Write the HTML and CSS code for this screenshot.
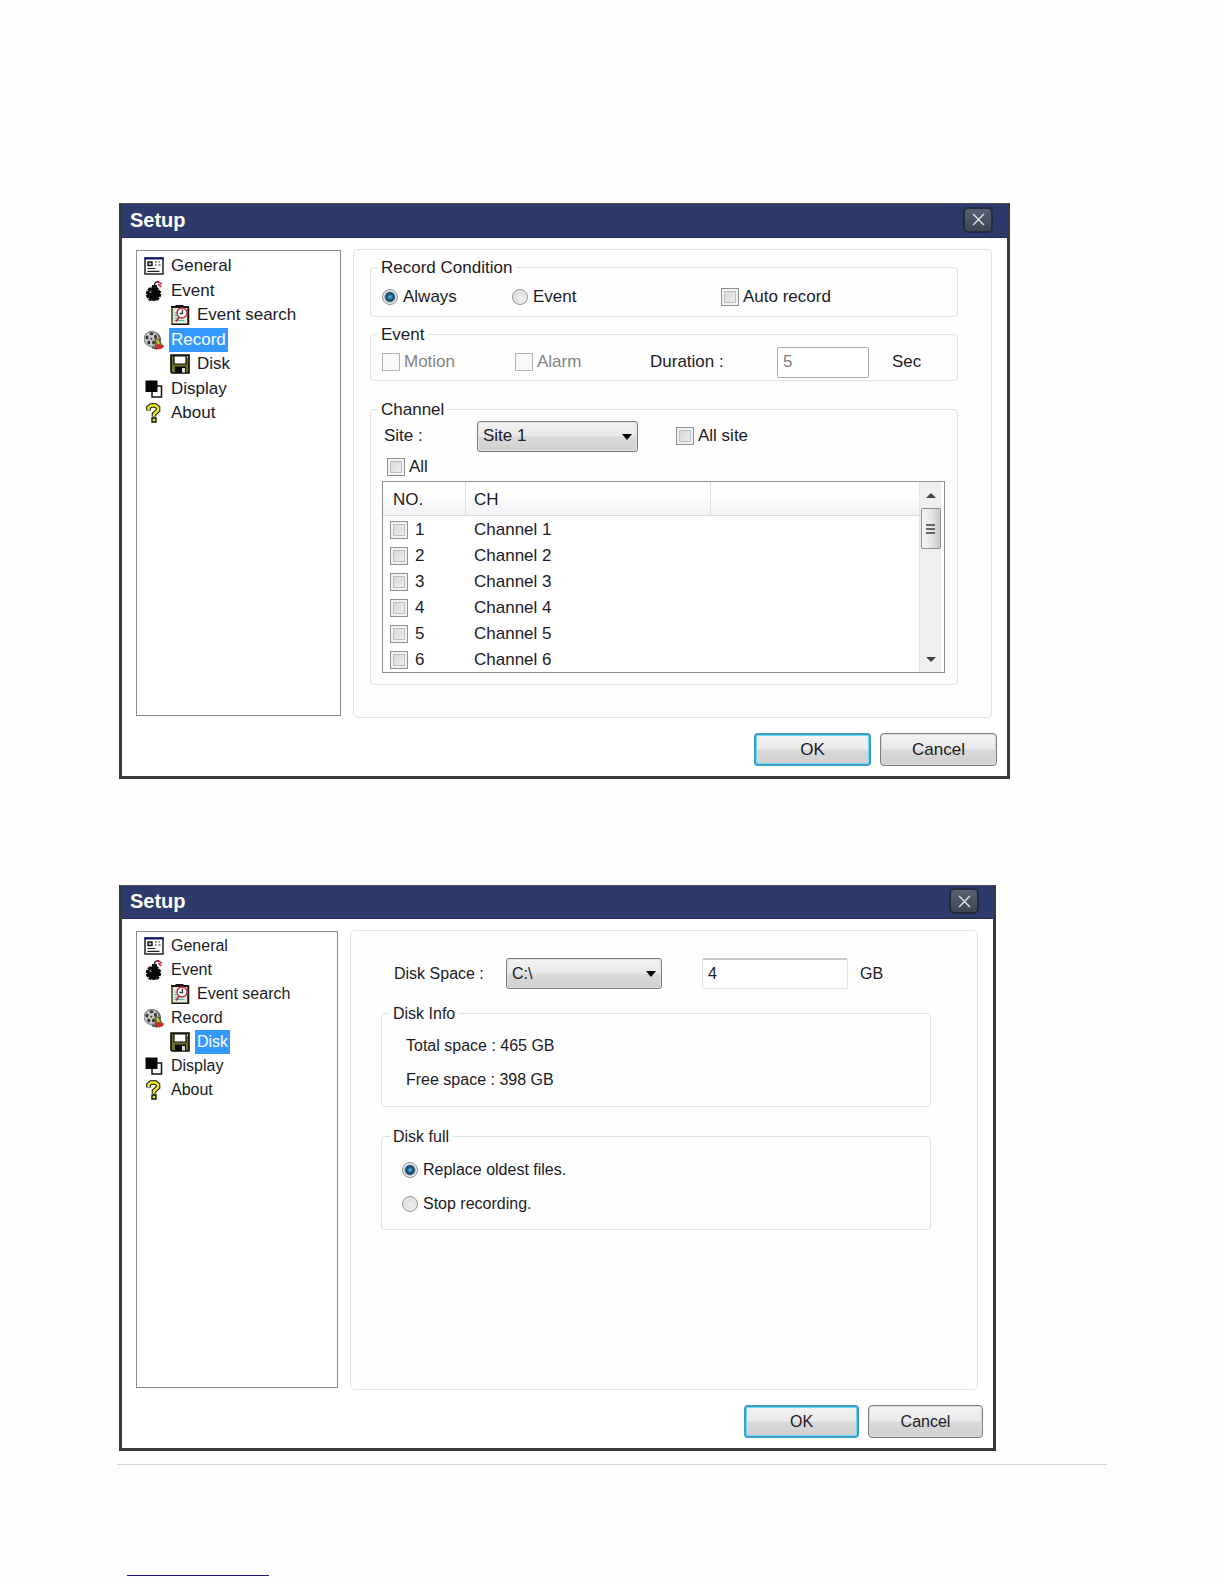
FILE: index.html
```
<!DOCTYPE html>
<html lang="en">
<head>
    <meta charset="UTF-8">
    <meta name="viewport" content="width=device-width, initial-scale=1.0">
    <title>Setup</title>
    <link rel="stylesheet" href="styles.css">
</head>
<body>
    <!-- Icons shared by both dialogs -->
    <svg class="icon-sprite" aria-hidden="true">
        <symbol id="icon-general" viewBox="0 0 20 20">
            <rect x="1" y="2" width="18" height="16" fill="#fff" stroke="#111" stroke-width="1.4"/>
            <path d="M0.5 2.5h19" stroke="#15157a" stroke-width="2"/>
            <rect x="4" y="6" width="4" height="3.5" fill="#ccc" stroke="#111" stroke-width="1.4"/>
            <path d="M11 6h2M14.5 6h1.500M11 9h1.500M14.5 9h2M3.5 12.5h8M3.5 15.3h12" stroke="#222" stroke-width="1.2"/>
        </symbol>
        <symbol id="icon-bomb" viewBox="0 0 20 20">
            <circle cx="9.500" cy="13" r="6.500" fill="#080808" stroke="#080808" stroke-width="2.400" stroke-dasharray="3 1"/>
            <path d="M8 7V4h5v3z" fill="#111"/>
            <path d="M10.500 4c0-3 3-4 4.500-2.500" fill="none" stroke="#222" stroke-width="1.300"/>
            <path d="M14 0l1.500 2M14.500 3l2.500 3M17 1.500v2" stroke="#c41e32" stroke-width="1.700"/>
            <path d="M5 11h3M6.500 9.500v3" stroke="#666" stroke-width="1.200"/>
        </symbol>
        <symbol id="icon-search" viewBox="0 0 20 20">
            <rect x="2" y="2" width="16" height="17.500" fill="#e5e6c4" stroke="#5f6228" stroke-width="1.800"/>
            <path d="M18.500 2v17.500H2" fill="none" stroke="#111" stroke-width="1.500"/>
            <path d="M1 3V1h4l1-1h7l1 1h5v2z" fill="#171717"/>
            <rect x="4" y="4.500" width="12" height="13" fill="#d7f0ea"/>
            <path d="M4.500 8h3M4.500 10.500h3M4.500 13h5M4.500 15.500h10" stroke="#5fb5ae" stroke-width="1.200"/>
            <circle cx="12" cy="8" r="5" fill="#fff" stroke="#c32a3d" stroke-width="1.400"/>
            <path d="M12.500 4.500V8.500H9.500" fill="none" stroke="#334" stroke-width="1.300"/>
            <path d="M9 12.500l-3 4" stroke="#c8202c" stroke-width="1.500"/>
        </symbol>
        <symbol id="icon-record" viewBox="0 0 20 20">
            <ellipse cx="9" cy="9" rx="8.500" ry="7.500" fill="#666" transform="rotate(35 9 9)"/>
            <ellipse cx="7.500" cy="9" rx="7.500" ry="7.500" fill="#c9c9c9" stroke="#777"/>
            <g fill="#383838">
                <ellipse cx="7.500" cy="3.800" rx="2" ry="1.500"/>
                <ellipse cx="3" cy="7.500" rx="1.500" ry="2"/>
                <ellipse cx="11.500" cy="6.800" rx="1.500" ry="2"/>
                <ellipse cx="4.800" cy="12.500" rx="1.500" ry="2"/>
                <ellipse cx="9.500" cy="12.500" rx="1.500" ry="2"/>
                <circle cx="7.300" cy="8.700" r="1"/>
            </g>
            <path d="M11 8l4 2 4 6.500-7 3z" fill="#77782b" stroke="#44451c" stroke-width=".7"/>
            <path d="M13 10l2 4" stroke="#d3ca4b" stroke-width="2"/>
            <path d="M11 16l4-2 1.500 1.500 3.500-.5-1 3-4 1.500z" fill="#d42820"/>
            <path d="M7 17h5l2 2H9z" fill="#555"/>
        </symbol>
        <symbol id="icon-disk" viewBox="0 0 20 20">
            <path d="M1 1h18v18H2l-1-1z" fill="#707127" stroke="#0a0a0a" stroke-width="1.600"/>
            <path d="M4 2h12v8H4z" fill="#fff" stroke="#111" stroke-width="1.200"/>
            <path d="M5 12.500h11V19H5z" fill="#0a0a0a"/>
            <path d="M12 14h3v4.500h-3z" fill="#ddd"/>
            <path d="M17 3h1" stroke="#e5e5c5" stroke-width="1.500"/>
        </symbol>
        <symbol id="icon-display" viewBox="0 0 20 20">
            <rect x="8" y="7" width="9.500" height="11" fill="#fff" stroke="#111" stroke-width="1.500"/>
            <rect x="1.500" y="1.500" width="12" height="11.500" fill="#050505"/>
        </symbol>
        <symbol id="icon-about" viewBox="0 0 20 20">
            <path d="M4.500 7.500V4.500L7 2.500h4.500L14 4.500v3L10 11v2.500" fill="none" stroke="#101005" stroke-width="4.600"/>
            <path d="M8 15h4v4H8z" fill="#eaea28" stroke="#101005" stroke-width="1.400"/>
            <path d="M4.500 7V4.500L7 2.500h4.500L14 4.500v3L10 11v2" fill="none" stroke="#eaea28" stroke-width="2.600"/>
        </symbol>
    </svg>

    <main class="page">
        <section class="dialog dialog-record">
            <header class="title-bar">
                <h2>Setup</h2>
                <button class="close-button" type="button" aria-label="Close">
                    <svg viewBox="0 0 12 12"><path d="M1 1l10 10M11 1L1 11"/></svg>
                </button>
            </header>
            <div class="dialog-body">
                <ul class="tree">
                    <li><svg class="icon"><use href="#icon-general"/></svg><span>General</span></li>
                    <li><svg class="icon"><use href="#icon-bomb"/></svg><span>Event</span></li>
                    <li class="child"><svg class="icon"><use href="#icon-search"/></svg><span>Event search</span></li>
                    <li><svg class="icon"><use href="#icon-record"/></svg><span class="selected">Record</span></li>
                    <li class="child"><svg class="icon"><use href="#icon-disk"/></svg><span>Disk</span></li>
                    <li><svg class="icon"><use href="#icon-display"/></svg><span>Display</span></li>
                    <li><svg class="icon"><use href="#icon-about"/></svg><span>About</span></li>
                </ul>

                <form class="panel">
                    <fieldset>
                        <legend>Record Condition</legend>
                        <div class="row condition-row">
                            <label><input type="radio" name="condition" checked>Always</label>
                            <label><input type="radio" name="condition">Event</label>
                            <label><input type="checkbox">Auto record</label>
                        </div>
                    </fieldset>

                    <fieldset class="event-group">
                        <legend>Event</legend>
                        <div class="row event-row">
                            <label class="disabled"><input type="checkbox" disabled>Motion</label>
                            <label class="disabled"><input type="checkbox" disabled>Alarm</label>
                            <label for="duration">Duration :</label>
                            <input class="text-box duration" type="text" id="duration" value="5" disabled>
                            <span>Sec</span>
                        </div>
                    </fieldset>

                    <fieldset class="channel-group">
                        <legend>Channel</legend>
                        <div class="row site-row">
                            <label for="site">Site :</label>
                            <div class="select-box site-select">
                                <select id="site"><option>Site 1</option></select>
                            </div>
                            <label><input type="checkbox">All site</label>
                        </div>
                        <div class="row all-row">
                            <label><input type="checkbox">All</label>
                        </div>
                        <div class="channel-list">
                            <table>
                                <colgroup>
                                    <col class="col-no">
                                    <col class="col-ch">
                                    <col>
                                </colgroup>
                                <thead>
                                    <tr><th>NO.</th><th>CH</th><th></th></tr>
                                </thead>
                                <tbody>
                                    <tr><td><label><input type="checkbox">1</label></td><td>Channel 1</td><td></td></tr>
                                    <tr><td><label><input type="checkbox">2</label></td><td>Channel 2</td><td></td></tr>
                                    <tr><td><label><input type="checkbox">3</label></td><td>Channel 3</td><td></td></tr>
                                    <tr><td><label><input type="checkbox">4</label></td><td>Channel 4</td><td></td></tr>
                                    <tr><td><label><input type="checkbox">5</label></td><td>Channel 5</td><td></td></tr>
                                    <tr><td><label><input type="checkbox">6</label></td><td>Channel 6</td><td></td></tr>
                                </tbody>
                            </table>
                            <div class="scrollbar">
                                <div class="arrow arrow-up"></div>
                                <div class="thumb"><i></i><i></i><i></i></div>
                                <div class="arrow arrow-down"></div>
                            </div>
                        </div>
                    </fieldset>
                </form>
            </div>
            <footer class="dialog-buttons">
                <button class="button default" type="button">OK</button>
                <button class="button" type="button">Cancel</button>
            </footer>
        </section>

        <section class="dialog dialog-disk">
            <header class="title-bar">
                <h2>Setup</h2>
                <button class="close-button" type="button" aria-label="Close">
                    <svg viewBox="0 0 12 12"><path d="M1 1l10 10M11 1L1 11"/></svg>
                </button>
            </header>
            <div class="dialog-body">
                <ul class="tree">
                    <li><svg class="icon"><use href="#icon-general"/></svg><span>General</span></li>
                    <li><svg class="icon"><use href="#icon-bomb"/></svg><span>Event</span></li>
                    <li class="child"><svg class="icon"><use href="#icon-search"/></svg><span>Event search</span></li>
                    <li><svg class="icon"><use href="#icon-record"/></svg><span>Record</span></li>
                    <li class="child"><svg class="icon"><use href="#icon-disk"/></svg><span class="selected">Disk</span></li>
                    <li><svg class="icon"><use href="#icon-display"/></svg><span>Display</span></li>
                    <li><svg class="icon"><use href="#icon-about"/></svg><span>About</span></li>
                </ul>

                <form class="panel">
                    <div class="row space-row">
                        <label for="drive">Disk Space :</label>
                        <div class="select-box drive-select">
                            <select id="drive"><option>C:\</option></select>
                        </div>
                        <input class="text-box space" type="text" value="4" aria-label="Disk space in GB">
                        <span>GB</span>
                    </div>

                    <fieldset class="info-group">
                        <legend>Disk Info</legend>
                        <div class="lines">
                            <p>Total space : 465 GB</p>
                            <p>Free space : 398 GB</p>
                        </div>
                    </fieldset>

                    <fieldset class="full-group">
                        <legend>Disk full</legend>
                        <div class="lines choices">
                            <label><input type="radio" name="full" checked>Replace oldest files.</label>
                            <label><input type="radio" name="full">Stop recording.</label>
                        </div>
                    </fieldset>
                </form>
            </div>
            <footer class="dialog-buttons">
                <button class="button default" type="button">OK</button>
                <button class="button" type="button">Cancel</button>
            </footer>
        </section>

        <hr class="page-rule">
        <a class="page-link" href="#" aria-label="Page link"></a>
    </main>
</body>
</html>
```
FILE: styles.css
```
* {
    margin: 0;
    padding: 0;
    box-sizing: border-box;
}

body {
    background-color: #fefefe;
    color: #1c1a26;
    font-family: "Liberation Sans", Arial, sans-serif;
    font-size: 17px;
    line-height: 20px;
}

input, select, button {
    font: inherit;
    color: inherit;
}

.icon-sprite {
    display: none;
}

.page {
    padding: 203px 117px 8px;
}

/* Dialog frame */
.dialog {
    width: 100%;
    margin-left: 2px;
    border: 3px solid #38383a;
    border-top: 1px solid #4a4f5c;
    background-color: #fff;
}

.dialog-record {
    max-width: 891px;
}

.dialog-disk {
    max-width: 877px;
    margin-top: 106px;
    font-size: 16px;
}

.title-bar {
    display: flex;
    justify-content: space-between;
    align-items: center;
    height: 34px;
    padding: 0 14px 2px 8px;
    background-color: #2c3b6b;
    border-bottom: 1px solid #232b52;
    color: #fff;
}

.dialog-disk .title-bar {
    height: 33px;
}

.title-bar h2 {
    font-size: 20px;
    font-weight: bold;
}

.close-button {
    display: flex;
    justify-content: center;
    align-items: center;
    width: 30px;
    height: 26px;
    border: 2px solid #232b42;
    border-radius: 5px;
    background: linear-gradient(#596170, #3c4551);
}

.close-button svg {
    width: 13px;
    height: 13px;
    fill: none;
    stroke: #e2e4e8;
    stroke-width: 1.3;
}

.dialog-body {
    display: flex;
    gap: 12px;
    padding: 11px 15px 15px 14px;
}

.dialog-buttons {
    display: flex;
    justify-content: flex-end;
    gap: 9px;
    padding: 0 10px 10px;
}

.button {
    width: 117px;
    height: 33px;
    border: 1px solid #7c7c7c;
    border-radius: 4px;
    background: linear-gradient(#f3f3f3, #e9e9e9 48%, #d9d9d9 52%, #cfcfcf);
    box-shadow: inset 0 0 0 1px #d8d8d8;
}

.button.default {
    border: 2px solid #3f9cc6;
    box-shadow: inset 0 0 0 1px #6cd9f5;
}

.dialog-disk .button {
    width: 115px;
}

/* Navigation tree */
.tree {
    flex: 0 0 205px;
    margin: 1px 0 2px;
    padding: 3px 7px;
    border: 1px solid #8b8b8b;
    background-color: #fff;
    list-style: none;
}

.dialog-disk .tree {
    flex-basis: 202px;
    padding-top: 2px;
}

.tree li {
    display: flex;
    align-items: center;
    gap: 5px;
    height: 24px;
}

.dialog-record .tree li:nth-child(even) {
    height: 25px;
}

.tree .child {
    padding-left: 26px;
}

.tree .icon {
    width: 20px;
    height: 20px;
}

.tree span {
    padding: 0 2px;
    line-height: 24px;
}

.tree .selected {
    background-color: #3399ff;
    color: #fff;
}

/* Settings panel */
.panel {
    flex: 1;
    min-width: 0;
    border: 1px solid #dfe3e3;
    border-radius: 5px;
    background-color: #fefefe;
}

.dialog-record .panel {
    padding: 7px 33px 32px 16px;
}

.dialog-disk .panel {
    min-height: 460px;
    padding: 27px 46px 0 30px;
}

fieldset {
    min-width: 0;
    border: 1px solid #dce2e2;
    border-radius: 4px;
}

legend {
    margin-left: 7px;
    padding: 1px 4px 0 3px;
    line-height: 19px;
}

.event-group {
    margin-top: 7px;
}

.channel-group {
    margin-top: 18px;
    padding-bottom: 11px;
}

.info-group {
    margin-top: 14px;
}

.full-group {
    margin-top: 19px;
}

.dialog-disk legend {
    margin-left: 8px;
}

.row {
    display: grid;
    align-items: center;
    padding-left: 11px;
}

.condition-row {
    grid-template-columns: 130px 209px 1fr;
    height: 39px;
}

.event-row {
    grid-template-columns: 133px 135px 127px 115px 1fr;
    height: 36px;
}

.site-row {
    grid-template-columns: 93px 199px 1fr;
    height: 34px;
    padding-left: 13px;
}

.all-row {
    height: 28px;
    padding-left: 16px;
}

.space-row {
    grid-template-columns: 112px 196px 158px 1fr;
    height: 31px;
    padding-left: 13px;
}

label {
    display: flex;
    align-items: center;
    gap: 4px;
}

.disabled {
    color: #838383;
}

.lines {
    padding: 6px 24px 9px;
    line-height: 34px;
}

.choices {
    padding: 7px 20px 8px;
}

/* Form controls */
input[type="checkbox"] {
    appearance: none;
    width: 18px;
    height: 18px;
    border: 1px solid #8e8f8f;
    background: linear-gradient(135deg, #cfd1d3, #f5f5f5);
    box-shadow: inset 0 0 0 2px #f2f2f2, inset 0 0 0 3px #bcbfc2;
}

input[type="checkbox"]:disabled {
    border-color: #b3b3b3;
    background: #fafafa;
    box-shadow: none;
}

input[type="radio"] {
    appearance: none;
    width: 16px;
    height: 16px;
    margin-right: 1px;
    border: 1px solid #8e8f8f;
    border-radius: 50%;
    background: radial-gradient(circle at 60% 60%, #f2f2f2, #cfcfcf);
    box-shadow: inset 0 0 0 1px #f0f0f0;
}

input[type="radio"]:checked {
    background: radial-gradient(circle, #6fc0e4 0, #2779a8 2px, #123c5c 4px, #d5dee4 6px);
}

.text-box {
    height: 31px;
    padding: 0 5px;
    border: 1px solid #aaa;
    border-radius: 2px;
    background-color: #fff;
}

.duration {
    width: 92px;
    color: #838383;
}

.space {
    width: 146px;
    border: 1px solid #e0e2e2;
    border-top: 2px solid #c8c8c8;
}

.select-box {
    position: relative;
    height: 31px;
}

.site-select {
    width: 161px;
}

.drive-select {
    width: 156px;
}

.select-box select {
    appearance: none;
    width: 100%;
    height: 100%;
    padding: 0 24px 0 5px;
    border: 1px solid #7c7c7c;
    border-radius: 3px;
    background: linear-gradient(#f2f2f2, #e8e8e8 48%, #dadada 52%, #cfcfcf);
    box-shadow: inset 0 0 0 1px #e4e4e4;
}

.select-box::after {
    content: "";
    position: absolute;
    top: 13px;
    right: 6px;
    border: 5px solid transparent;
    border-top: 6px solid #000;
    border-bottom: 0;
    pointer-events: none;
}

/* Channel list */
.channel-list {
    display: flex;
    margin: 0 12px 0 11px;
    border: 1px solid #8d8f92;
    background-color: #fff;
}

.channel-list table {
    flex: 1;
    table-layout: fixed;
    border-collapse: separate;
    border-spacing: 0;
}

.col-no {
    width: 83px;
}

.col-ch {
    width: 245px;
}

.channel-list th {
    height: 34px;
    padding: 2px 0 0 8px;
    border-right: 1px solid #dfe2e5;
    border-bottom: 1px solid #d5d9dc;
    background: linear-gradient(#fff 30%, #f0f2f4);
    font-weight: normal;
    text-align: left;
}

.channel-list th:first-child {
    padding-left: 10px;
}

.channel-list th:last-child {
    border-right: 0;
}

.channel-list td {
    height: 26px;
    padding: 1px 0 0 8px;
}

.channel-list td:first-child {
    padding-left: 7px;
}

.channel-list td label {
    gap: 7px;
}

.scrollbar {
    display: flex;
    flex-direction: column;
    align-items: center;
    width: 22px;
    margin-right: 3px;
    border-left: 1px solid #e6e6e6;
    background-color: #efefef;
}

.arrow {
    border: 5px solid transparent;
}

.arrow-up {
    margin: 11px 0 10px;
    border-top: 0;
    border-bottom: 5px solid #444;
}

.arrow-down {
    margin: auto 0 10px;
    border-bottom: 0;
    border-top: 5px solid #444;
}

.thumb {
    display: flex;
    flex-direction: column;
    justify-content: center;
    align-items: center;
    gap: 2px;
    width: 20px;
    height: 41px;
    border: 1px solid #8f8f8f;
    border-radius: 2px;
    background: linear-gradient(90deg, #f6f6f6, #e6e6e6 50%, #c8c8c8);
}

.thumb i {
    width: 9px;
    height: 2px;
    background-color: #666;
}

/* Bottom of the page */
.page-rule {
    margin-top: 13px;
    border: 0;
    border-top: 1px solid #d3d3d3;
}

.page-link {
    display: block;
    width: 142px;
    height: 21px;
    margin: 90px 0 0 10px;
    border-bottom: 1px solid #17178a;
}
```
